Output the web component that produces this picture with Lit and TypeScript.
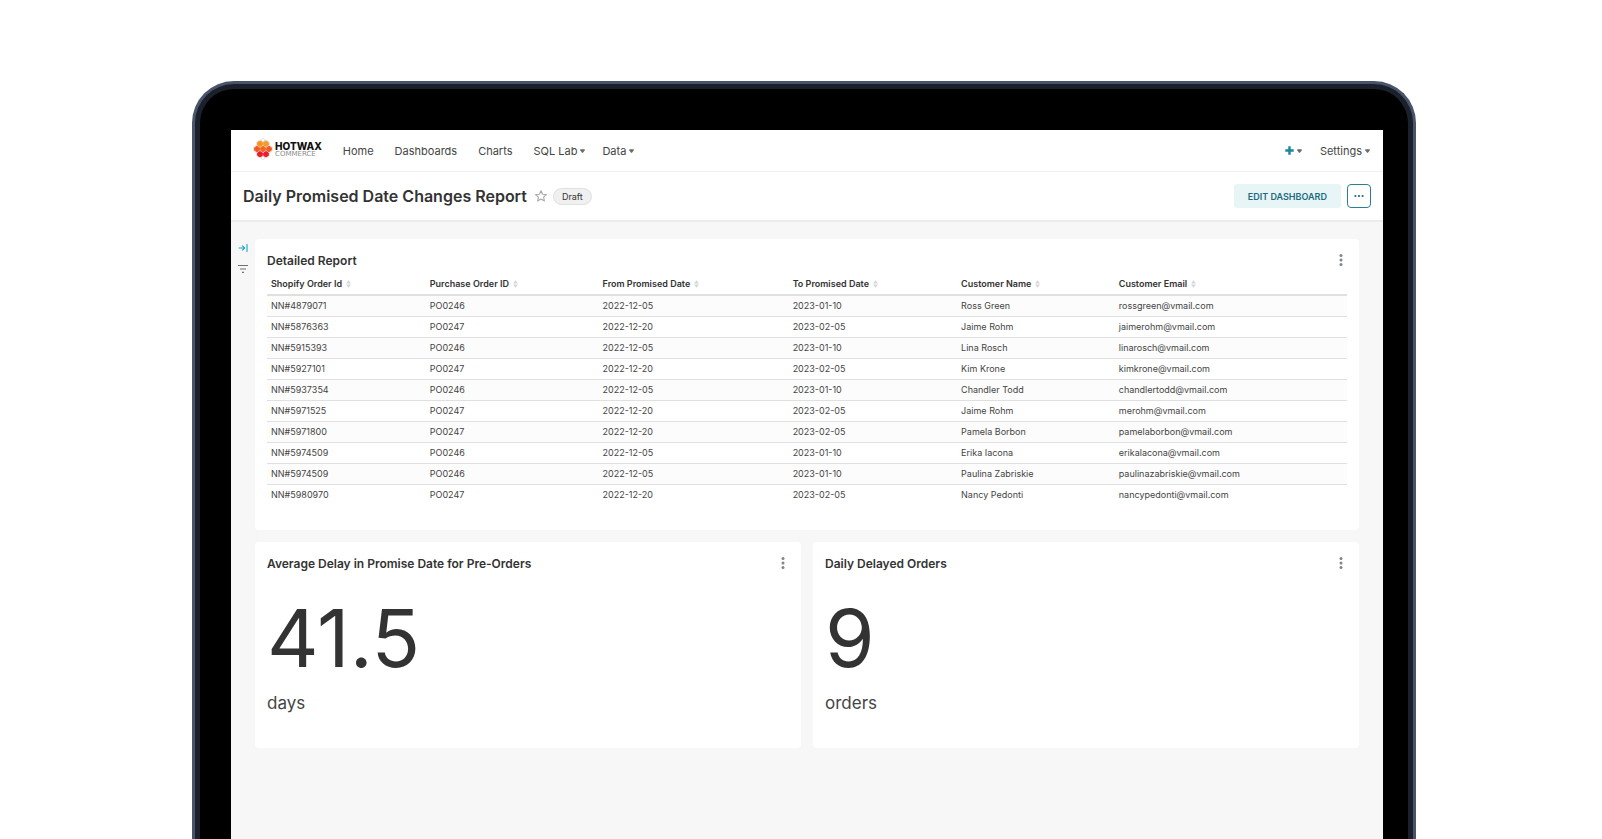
import { LitElement, html, css, svg } from "lit";
import { customElement, property } from "lit/decorators.js";

const columns = [
  { label: "Shopify Order Id", cls: "c1" },
  { label: "Purchase Order ID", cls: "c2" },
  { label: "From Promised Date", cls: "c3" },
  { label: "To Promised Date", cls: "c4" },
  { label: "Customer Name", cls: "c5" },
  { label: "Customer Email", cls: "c6" },
];

const orders = [
  ["NN#4879071", "PO0246", "2022-12-05", "2023-01-10", "Ross Green", "rossgreen@vmail.com"],
  ["NN#5876363", "PO0247", "2022-12-20", "2023-02-05", "Jaime Rohm", "jaimerohm@vmail.com"],
  ["NN#5915393", "PO0246", "2022-12-05", "2023-01-10", "Lina Rosch", "linarosch@vmail.com"],
  ["NN#5927101", "PO0247", "2022-12-20", "2023-02-05", "Kim Krone", "kimkrone@vmail.com"],
  ["NN#5937354", "PO0246", "2022-12-05", "2023-01-10", "Chandler Todd", "chandlertodd@vmail.com"],
  ["NN#5971525", "PO0247", "2022-12-20", "2023-02-05", "Jaime Rohm", "merohm@vmail.com"],
  ["NN#5971800", "PO0247", "2022-12-20", "2023-02-05", "Pamela Borbon", "pamelaborbon@vmail.com"],
  ["NN#5974509", "PO0246", "2022-12-05", "2023-01-10", "Erika Iacona", "erikalacona@vmail.com"],
  ["NN#5974509", "PO0246", "2022-12-05", "2023-01-10", "Paulina Zabriskie", "paulinazabriskie@vmail.com"],
  ["NN#5980970", "PO0247", "2022-12-20", "2023-02-05", "Nancy Pedonti", "nancypedonti@vmail.com"],
];

const base = css`
  * {
    box-sizing: border-box;
  }
  svg {
    display: block;
    flex: none;
  }
  button {
    font: inherit;
    color: inherit;
    background: none;
    border: 0;
    padding: 0;
    cursor: pointer;
  }
  a {
    color: inherit;
    text-decoration: none;
  }
  h1,
  h2,
  p {
    margin: 0;
  }
`;

const caret = html`<svg width="5" height="4" viewBox="0 0 5 4" aria-hidden="true">
  <path d="M0.3 0.3h4.4v0.9L3 3.8H2L0.3 1.2z" fill="#6a6a6a" />
</svg>`;

const cells: [number, number, string][] = [
  [7, 5.8, "#f7931e"],
  [13, 5.8, "#f59b2b"],
  [4, 11, "#f15a24"],
  [10, 11, "#f4661f"],
  [16, 11, "#f15a24"],
  [7, 16.2, "#ed1c24"],
  [13, 16.2, "#ee1d2b"],
];
const hex = (x: number, y: number, r: number) =>
  [0, 1, 2, 3, 4, 5]
    .map((i) => {
      const a = (Math.PI / 3) * i + Math.PI / 6;
      return `${(x + r * Math.cos(a)).toFixed(2)},${(y + r * Math.sin(a)).toFixed(2)}`;
    })
    .join(" ");

@customElement("brand-logo")
class BrandLogo extends LitElement {
  static styles = [
    base,
    css`
      :host {
        display: block;
      }
      .logo {
        display: flex;
        align-items: center;
        gap: 2px;
        padding-bottom: 3px;
      }
      .words {
        display: flex;
        flex-direction: column;
      }
      .name {
        font-size: 10px;
        line-height: 9px;
        font-weight: 800;
        color: #111;
      }
      .sub {
        font-family: "DejaVu Sans", sans-serif;
        font-size: 7px;
        line-height: 6px;
        color: #8c8c8c;
      }
    `,
  ];
  render() {
    return html`<a class="logo" href="#home">
      <svg width="20" height="22" viewBox="0 0 20 22" aria-hidden="true">
        ${cells.map(([x, y]) => svg`<polygon points=${hex(x, y, 3.9)} fill="#fff" stroke="#c9c4c0" stroke-width="0.5" />`)}
        <polygon points=${hex(10, 2.4, 2)} fill="none" stroke="#cfcac6" stroke-width="0.5" />
        <polygon points=${hex(10, 19.6, 2)} fill="none" stroke="#cfcac6" stroke-width="0.5" />
        ${cells.map(([x, y, c]) => svg`<polygon points=${hex(x, y, 2.7)} fill=${c} stroke=${c} stroke-width="1" stroke-linejoin="round" />`)}
      </svg>
      <span class="words"><span class="name">HOTWAX</span><span class="sub">COMMERCE</span></span>
    </a>`;
  }
}

@customElement("chart-card")
class ChartCard extends LitElement {
  @property() heading = "";
  static styles = [
    base,
    css`
      :host {
        display: block;
        background: #fff;
        border-radius: 4px;
        padding: 12px;
      }
      .head {
        display: flex;
        justify-content: space-between;
        align-items: center;
        height: 20px;
      }
      .title {
        font-size: 12px;
        line-height: 20px;
        font-weight: 600;
      }
      .menu {
        width: 12px;
        height: 20px;
        padding-bottom: 2px;
        display: grid;
        place-items: center;
      }
    `,
  ];
  render() {
    return html`<div class="head">
        <h2 class="title">${this.heading}</h2>
        <button class="menu" aria-label="More options">
          <svg width="4" height="14" viewBox="0 0 4 14" fill="#7b868e">
            <circle cx="2" cy="2.4" r="1.5" />
            <circle cx="2" cy="7" r="1.5" />
            <circle cx="2" cy="11.6" r="1.5" />
          </svg>
        </button>
      </div>
      <slot></slot>`;
  }
}

@customElement("app-root")
class AppRoot extends LitElement {
  static styles = [
    base,
    css`
      :host {
        display: flex;
        min-height: 100vh;
        box-sizing: border-box;
        padding: 81px 186px 0 192px;
        background: #fff;
        font-family: Inter, "Liberation Sans", sans-serif;
        color: #333;
      }
      .shell {
        flex: 1;
        display: flex;
        border: 3px solid #4a5468;
        border-bottom: 0;
        border-radius: 42px 42px 0 0;
        background: #1a202c;
      }
      .bezel {
        flex: 1;
        display: flex;
        margin: 5px 5px 0;
        padding: 41px 25px 0 31px;
        border-radius: 34px 34px 0 0;
        background: #000;
      }
      .screen {
        flex: 1;
        min-width: 0;
        display: flex;
        flex-direction: column;
        background: #f7f7f7;
      }
      .nav {
        display: flex;
        justify-content: space-between;
        align-items: center;
        height: 42px;
        padding: 0 13px 0 22px;
        background: #fff;
        border-bottom: 1px solid #f0f0f0;
        font-size: 11px;
        line-height: 16px;
        color: #444;
      }
      .links,
      .menus,
      .tools {
        display: flex;
        align-items: center;
      }
      .links {
        gap: 21px;
      }
      .menus {
        gap: 17px;
      }
      .tools {
        gap: 18px;
      }
      .item {
        display: flex;
        align-items: center;
        gap: 3px;
      }
      .bar {
        display: flex;
        justify-content: space-between;
        align-items: center;
        height: 50px;
        padding: 0 12px;
        background: #fff;
        border-bottom: 2px solid #ececec;
      }
      .heading,
      .actions {
        display: flex;
        align-items: center;
      }
      .heading {
        gap: 6px;
      }
      .page-title {
        font-size: 16px;
        line-height: 24px;
        font-weight: 600;
        margin-right: 2px;
      }
      .draft {
        font-size: 9px;
        line-height: 15px;
        padding: 0 8px;
        border: 1px solid #e0e0e0;
        border-radius: 9px;
        background: #f0f0f0;
      }
      .actions {
        gap: 6px;
      }
      .edit {
        height: 24px;
        padding: 0 14px;
        border-radius: 3px;
        background: #e8f5f7;
        color: #1a6a80;
        font-size: 9px;
        font-weight: 600;
      }
      .more {
        width: 24px;
        height: 24px;
        display: grid;
        place-items: center;
        border: 1px solid #2b7f95;
        border-radius: 4px;
      }
      .body {
        display: flex;
        padding: 17px 24px 0 0;
      }
      .rail {
        width: 24px;
        display: flex;
        flex-direction: column;
        align-items: center;
        gap: 11px;
        padding-top: 4px;
      }
      .grid {
        flex: 1;
        min-width: 0;
        display: grid;
        grid-template-columns: 1fr 1fr;
        gap: 12px;
      }
      .wide {
        grid-column: 1 / -1;
        padding-bottom: 25px;
      }
      .table {
        width: 100%;
        table-layout: fixed;
        border-collapse: separate;
        border-spacing: 0;
        font-size: 9px;
        line-height: 12px;
        color: #444;
      }
      .table th,
      .table td {
        text-align: left;
        padding: 4px;
        border-bottom: 1px solid #e0e0e0;
        white-space: nowrap;
      }
      .table th {
        font-weight: 600;
        padding: 7px 4px 4px;
        border-bottom: 2px solid #e0e0e0;
        color: #333;
      }
      .table tbody tr:nth-child(odd) {
        background: #fcfcfc;
      }
      .table tbody tr:last-child td {
        border-bottom: 0;
      }
      .sort {
        display: flex;
        align-items: center;
        gap: 4px;
        font-weight: 600;
      }
      .c1 { width: 14.7%; }
      .c2 { width: 16%; }
      .c3 { width: 17.6%; }
      .c4 { width: 15.6%; }
      .c5 { width: 14.6%; }
      .value {
        font-size: 80px;
        line-height: 98px;
        margin-top: 15px;
      }
      .unit {
        font-size: 17px;
        line-height: 24px;
        margin-top: 4px;
        padding-bottom: 21px;
        color: #444;
      }
    `,
  ];

  render() {
    return html`<div class="shell">
      <div class="bezel">
        <div class="screen">
          <nav class="nav">
            <div class="links">
              <brand-logo></brand-logo>
              <a class="item" href="#home">Home</a>
              <a class="item" href="#dashboards">Dashboards</a>
              <a class="item" href="#charts">Charts</a>
              <div class="menus">
                <button class="item">SQL Lab ${caret}</button>
                <button class="item">Data ${caret}</button>
              </div>
            </div>
            <div class="tools">
              <button class="item" aria-label="Add">
                <svg width="9" height="9" viewBox="0 0 9 9"><path d="M4.5 0.3v8.4M0.3 4.5h8.4" stroke="#1985a0" stroke-width="2.4" /></svg>
                ${caret}
              </button>
              <button class="item">Settings ${caret}</button>
            </div>
          </nav>
          <header class="bar">
            <div class="heading">
              <h1 class="page-title">Daily Promised Date Changes Report</h1>
              <button aria-label="Favorite">
                <svg width="12" height="12" viewBox="0 0 12 12">
                  <path d="M6 0.7l1.6 3.5 3.8.4-2.8 2.6.8 3.8L6 9.1 2.6 11l.8-3.8L.6 4.6l3.8-.4z" fill="none" stroke="#a8a8a8" stroke-width="1.1" stroke-linejoin="round" />
                </svg>
              </button>
              <span class="draft">Draft</span>
            </div>
            <div class="actions">
              <button class="edit">EDIT DASHBOARD</button>
              <button class="more" aria-label="More">
                <svg width="10" height="4" viewBox="0 0 10 4" fill="#1a6a80">
                  <circle cx="1.4" cy="2" r="1.1" /><circle cx="5" cy="2" r="1.1" /><circle cx="8.6" cy="2" r="1.1" />
                </svg>
              </button>
            </div>
          </header>
          <main class="body">
            <aside class="rail">
              <button aria-label="Expand filters">
                <svg width="10" height="10" viewBox="0 0 10 10" fill="none" stroke="#20a7c9" stroke-width="1.1">
                  <path d="M0.6 5h6M4.3 2.6L6.7 5 4.3 7.4M9 1v8" />
                </svg>
              </button>
              <button aria-label="Filters">
                <svg width="12" height="10" viewBox="0 0 12 10" stroke="#707070" stroke-width="1.1">
                  <path d="M1 1.5h10M3 5h6M5 8.4h2" />
                </svg>
              </button>
            </aside>
            <section class="grid">
              <chart-card class="wide" heading="Detailed Report">
                <table class="table">
                  <thead>
                    <tr>
                      ${columns.map(
                        (c) => html`<th class=${c.cls}>
                          <button class="sort">
                            ${c.label}
                            <svg width="5" height="8" viewBox="0 0 5 8" fill="#d6d6d6"><path d="M0 3.4L2.5 0.2 5 3.4zM0 4.6h5L2.5 7.8z" /></svg>
                          </button>
                        </th>`
                      )}
                    </tr>
                  </thead>
                  <tbody>
                    ${orders.map((o) => html`<tr>${o.map((v) => html`<td>${v}</td>`)}</tr>`)}
                  </tbody>
                </table>
              </chart-card>
              <chart-card heading="Average Delay in Promise Date for Pre-Orders">
                <p class="value">41.5</p>
                <p class="unit">days</p>
              </chart-card>
              <chart-card heading="Daily Delayed Orders">
                <p class="value">9</p>
                <p class="unit">orders</p>
              </chart-card>
            </section>
          </main>
        </div>
      </div>
    </div>`;
  }
}
